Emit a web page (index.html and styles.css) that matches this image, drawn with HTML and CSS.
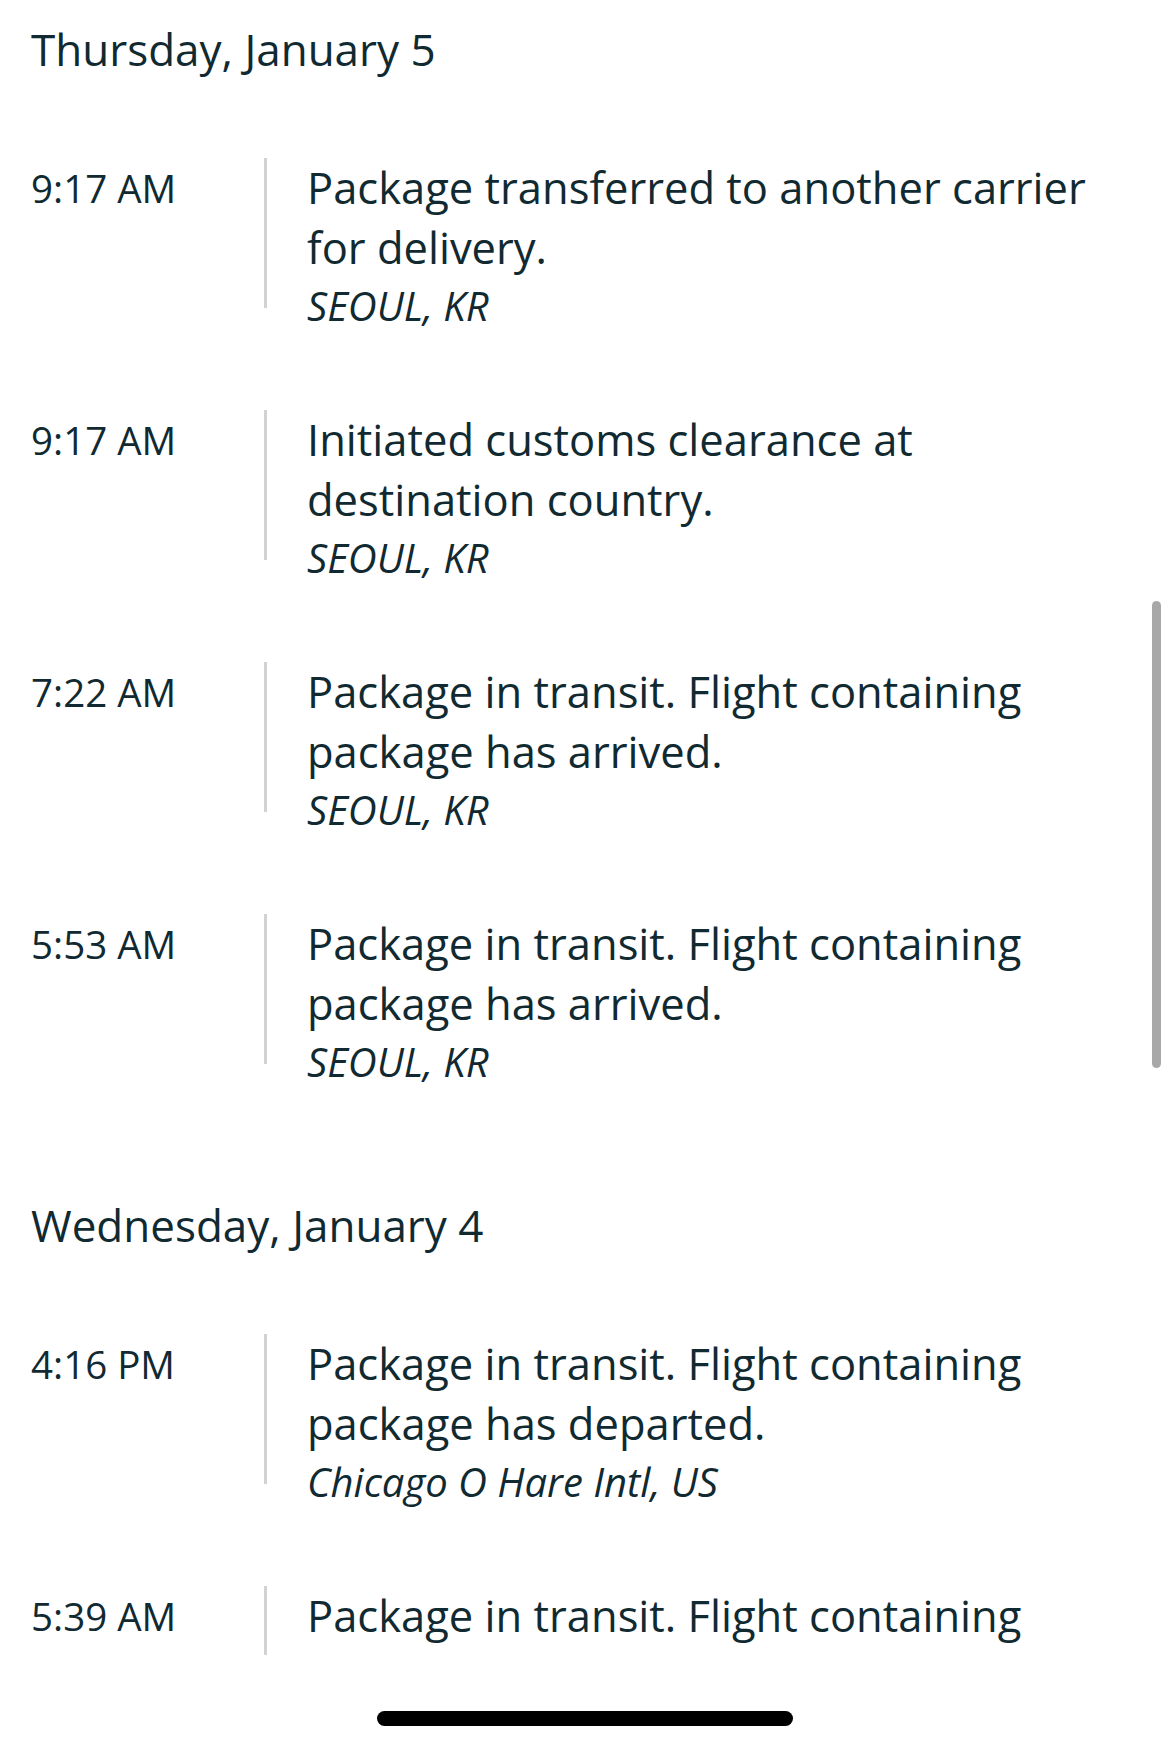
FILE: index.html
```html
<!DOCTYPE html>
<html lang="en">
<head>
<meta charset="utf-8">
<title>Tracking details</title>
<link rel="stylesheet" href="styles.css">
</head>
<body>
<div class="screen">
  <main class="tracking">
    <section class="day">
      <h2 class="day-title">Thursday, January 5</h2>
      <ol class="events">
        <li class="event">
          <span class="time">9:17 AM</span>
          <span class="rule"></span>
          <div class="detail">
            <p class="status">Package transferred to another carrier for delivery.</p>
            <p class="place">SEOUL, KR</p>
          </div>
        </li>
        <li class="event">
          <span class="time">9:17 AM</span>
          <span class="rule"></span>
          <div class="detail">
            <p class="status">Initiated customs clearance at destination country.</p>
            <p class="place">SEOUL, KR</p>
          </div>
        </li>
        <li class="event">
          <span class="time">7:22 AM</span>
          <span class="rule"></span>
          <div class="detail">
            <p class="status">Package in transit. Flight containing package has arrived.</p>
            <p class="place">SEOUL, KR</p>
          </div>
        </li>
        <li class="event">
          <span class="time">5:53 AM</span>
          <span class="rule"></span>
          <div class="detail">
            <p class="status">Package in transit. Flight containing package has arrived.</p>
            <p class="place">SEOUL, KR</p>
          </div>
        </li>
      </ol>
    </section>
    <section class="day">
      <h2 class="day-title">Wednesday, January 4</h2>
      <ol class="events">
        <li class="event">
          <span class="time">4:16 PM</span>
          <span class="rule"></span>
          <div class="detail">
            <p class="status">Package in transit. Flight containing package has departed.</p>
            <p class="place">Chicago O Hare Intl, US</p>
          </div>
        </li>
        <li class="event">
          <span class="time">5:39 AM</span>
          <span class="rule"></span>
          <div class="detail">
            <p class="status">Package in transit. Flight containing</p>
          </div>
        </li>
      </ol>
    </section>
  </main>
  <div class="scrollbar"></div>
</div>
<footer class="safe-area">
  <div class="home-indicator"></div>
</footer>
</body>
</html>
```
FILE: styles.css
```css
html, body {
  margin: 0;
  padding: 0;
  background: #ffffff;
}

body {
  width: 1170px;
  height: 1749px;
  overflow: hidden;
  font-family: "Open Sans", "Noto Sans", sans-serif;
  color: #112a31;
  display: flex;
  flex-direction: column;
}

.screen {
  position: relative;
  height: 1655px;
  overflow: hidden;
  flex: none;
}

.tracking {
  padding: 20px 60px 0 31px;
}

.day + .day {
  margin-top: 106px;
}

.day-title {
  margin: 0;
  font-size: 44px;
  font-weight: 400;
  line-height: 58px;
}

.events {
  list-style: none;
  margin: 80px 0 0;
  padding: 0;
  display: flex;
  flex-direction: column;
  gap: 76px;
}

.event {
  display: grid;
  grid-template-columns: 233px 3px 1fr;
}

.time {
  font-size: 38.5px;
  line-height: 60px;
}

.rule {
  align-self: start;
  height: 150px;
  background: #d2d2d2;
}

.detail {
  padding-left: 40px;
}

.status {
  margin: 0;
  font-size: 43.5px;
  line-height: 60px;
}

.place {
  margin: 0;
  font-size: 40px;
  font-style: italic;
  line-height: 56px;
}

.scrollbar {
  position: absolute;
  left: 1152px;
  top: 601px;
  width: 9px;
  height: 467px;
  border-radius: 5px;
  background: #a8a8a8;
}

.safe-area {
  flex: 1;
  display: flex;
  justify-content: center;
  padding-top: 56px;
  box-sizing: border-box;
}

.home-indicator {
  width: 416px;
  height: 15px;
  border-radius: 8px;
  background: #000000;
}
```
